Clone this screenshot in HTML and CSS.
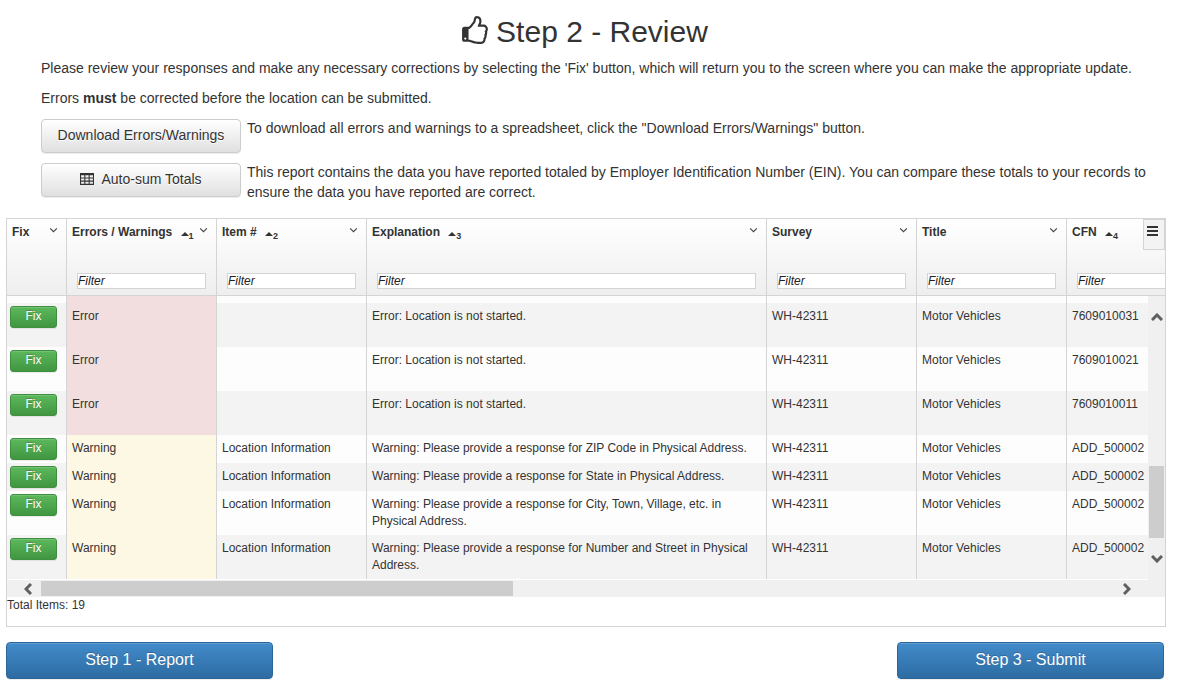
FILE: index.html
```html
<!DOCTYPE html>
<html lang="en">

<head>
    <meta charset="utf-8">
    <title>Step 2 - Review</title>
    <link rel="stylesheet" href="styles.css">
</head>

<body>
    <div class="intro">
        <h1>
            <svg class="thumb" viewBox="0 -128 1536 1664" aria-hidden="true"><path fill="currentColor" d="M256 1216q0-26-19-45t-45-19-45 19-19 45 19 45 45 19 45-19 19-45zm1152-576q0-51-39-89.500t-89-38.500h-352q0-58 48-159.500t48-160.500q0-98-32-145t-128-47q-26 26-38 85t-30.500 125.500-59.500 109.500q-22 23-77 91-4 5-23 30t-31.500 41-34.500 42.500-40 44-38.500 35.500-40 27-35.500 9h-32v640h32q13 0 31.500 3t33 6.500 38 11 35 11.500 35.500 12.500 29 10.500q211 73 342 73h121q192 0 192-167 0-26-5-56 30-16 47.500-52.500t17.500-73.500-18-69q53-50 53-119 0-25-10-55.500t-25-47.500q32-1 53.500-47t21.500-81zm128-1q0 89-49 163 9 33 9 69 0 77-38 144 3 21 3 43 0 101-60 178 1 139-85 219.500t-227 80.500h-129q-96 0-189.500-22.500t-216.500-65.500q-116-40-138-40h-288q-53 0-90.500-37.500t-37.500-90.500v-640q0-53 37.500-90.500t90.500-37.500h274q36-24 137-155 58-75 107-128 24-25 35.500-85.500t30.500-126.500 62-108q39-37 90-37 84 0 151 32.500t102 101.500 35 186q0 93-48 192h176q104 0 180 76t76 179z"/></svg>
            Step 2 - Review
        </h1>
        <p>Please review your responses and make any necessary corrections by selecting the 'Fix' button, which will return you to the screen where you can make the appropriate update.</p>
        <p>Errors <strong>must</strong> be corrected before the location can be submitted.</p>
        <div class="action-row">
            <button type="button" class="btn btn-default">Download Errors/Warnings</button>
            <div>To download all errors and warnings to a spreadsheet, click the "Download Errors/Warnings" button.</div>
        </div>
        <div class="action-row">
            <button type="button" class="btn btn-default">
                <svg class="table-icon" viewBox="0 0 13 11" aria-hidden="true"><path fill="none" stroke="currentColor" d="M.5 .5h12v10h-12zM0 1.500h13M0 4.500h13M0 7.500h13M4.500 2v9M8.500 2v9"/></svg>
                Auto-sum Totals
            </button>
            <div>This report contains the data you have reported totaled by Employer Identification Number (EIN). You can compare these totals to your records to ensure the data you have reported are correct.</div>
        </div>
    </div>

    <div class="grid">
        <div class="grid-viewport">
            <table>
                <colgroup>
                    <col class="col-fix">
                    <col>
                    <col>
                    <col class="col-explanation">
                    <col>
                    <col>
                    <col>
                </colgroup>
                <thead>
                    <tr>
                        <th>Fix <svg class="chevron" viewBox="0 0 8 5"><path d="M1 1l3 3 3-3"/></svg></th>
                        <th>Errors / Warnings <span class="sort">1</span><svg class="chevron" viewBox="0 0 8 5"><path d="M1 1l3 3 3-3"/></svg><input type="text" placeholder="Filter" aria-label="Filter errors / warnings"></th>
                        <th>Item # <span class="sort">2</span><svg class="chevron" viewBox="0 0 8 5"><path d="M1 1l3 3 3-3"/></svg><input type="text" placeholder="Filter" aria-label="Filter item number"></th>
                        <th>Explanation <span class="sort">3</span><svg class="chevron" viewBox="0 0 8 5"><path d="M1 1l3 3 3-3"/></svg><input type="text" placeholder="Filter" aria-label="Filter explanation"></th>
                        <th>Survey <svg class="chevron" viewBox="0 0 8 5"><path d="M1 1l3 3 3-3"/></svg><input type="text" placeholder="Filter" aria-label="Filter survey"></th>
                        <th>Title <svg class="chevron" viewBox="0 0 8 5"><path d="M1 1l3 3 3-3"/></svg><input type="text" placeholder="Filter" aria-label="Filter title"></th>
                        <th>CFN <span class="sort">4</span><input type="text" placeholder="Filter" aria-label="Filter CFN"></th>
                    </tr>
                </thead>
                <tbody>
                    <!-- bottom edge of the row scrolled under the header -->
                    <tr class="cut"><td></td><td class="error"></td><td></td><td></td><td></td><td></td><td></td></tr>
                    <tr class="tall">
                        <td class="fix"><button type="button" class="btn btn-success">Fix</button></td>
                        <td class="error">Error</td>
                        <td></td>
                        <td>Error: Location is not started.</td>
                        <td>WH-42311</td>
                        <td>Motor Vehicles</td>
                        <td>7609010031</td>
                    </tr>
                    <tr class="tall">
                        <td class="fix"><button type="button" class="btn btn-success">Fix</button></td>
                        <td class="error">Error</td>
                        <td></td>
                        <td>Error: Location is not started.</td>
                        <td>WH-42311</td>
                        <td>Motor Vehicles</td>
                        <td>7609010021</td>
                    </tr>
                    <tr class="tall">
                        <td class="fix"><button type="button" class="btn btn-success">Fix</button></td>
                        <td class="error">Error</td>
                        <td></td>
                        <td>Error: Location is not started.</td>
                        <td>WH-42311</td>
                        <td>Motor Vehicles</td>
                        <td>7609010011</td>
                    </tr>
                    <tr>
                        <td class="fix"><button type="button" class="btn btn-success">Fix</button></td>
                        <td class="warning">Warning</td>
                        <td>Location Information</td>
                        <td>Warning: Please provide a response for ZIP Code in Physical Address.</td>
                        <td>WH-42311</td>
                        <td>Motor Vehicles</td>
                        <td>ADD_500002</td>
                    </tr>
                    <tr>
                        <td class="fix"><button type="button" class="btn btn-success">Fix</button></td>
                        <td class="warning">Warning</td>
                        <td>Location Information</td>
                        <td>Warning: Please provide a response for State in Physical Address.</td>
                        <td>WH-42311</td>
                        <td>Motor Vehicles</td>
                        <td>ADD_500002</td>
                    </tr>
                    <tr>
                        <td class="fix"><button type="button" class="btn btn-success">Fix</button></td>
                        <td class="warning">Warning</td>
                        <td>Location Information</td>
                        <td>Warning: Please provide a response for City, Town, Village, etc. in Physical Address.</td>
                        <td>WH-42311</td>
                        <td>Motor Vehicles</td>
                        <td>ADD_500002</td>
                    </tr>
                    <tr>
                        <td class="fix"><button type="button" class="btn btn-success">Fix</button></td>
                        <td class="warning">Warning</td>
                        <td>Location Information</td>
                        <td>Warning: Please provide a response for Number and Street in Physical Address.</td>
                        <td>WH-42311</td>
                        <td>Motor Vehicles</td>
                        <td>ADD_500002</td>
                    </tr>
                </tbody>
            </table>
            <button type="button" class="grid-menu" aria-label="Grid menu"></button>
            <div class="scroll-y">
                <svg class="arrow-y" viewBox="0 0 12 8"><path d="M1 7l5-5 5 5"/></svg>
                <div class="thumb-y"></div>
                <svg class="arrow-y" viewBox="0 0 12 8"><path d="M1 1l5 5 5-5"/></svg>
            </div>
        </div>
        <div class="scroll-x">
            <svg class="arrow-x" viewBox="0 0 8 12"><path d="M7 1l-5 5 5 5"/></svg>
            <div class="thumb-x"></div>
            <svg class="arrow-x" viewBox="0 0 8 12"><path d="M1 1l5 5-5 5"/></svg>
        </div>
        <div class="grid-footer">Total Items: 19</div>
    </div>

    <div class="steps">
        <button type="button" class="btn btn-primary">Step 1 - Report</button>
        <button type="button" class="btn btn-primary">Step 3 - Submit</button>
    </div>
</body>

</html>
```
FILE: styles.css
```css
* {
    box-sizing: border-box;
}

body {
    margin: 0;
    padding: 15px 13px 10px 6px;
    font-family: Arial, "Liberation Sans", sans-serif;
    font-size: 14px;
    line-height: 20px;
    color: #333;
    background-color: #fff;
}

h1 {
    display: flex;
    justify-content: center;
    align-items: center;
    gap: 8px;
    margin: 0 0 10px;
    font-size: 30px;
    font-weight: normal;
    line-height: 33px;
}

.thumb {
    width: 26px;
    height: 28px;
    margin-bottom: 3px;
}

.intro {
    padding: 0 12px 0 35px;
}

.intro h1 {
    margin-left: -25px;
}

p {
    margin: 0 0 10px;
}

.action-row {
    display: flex;
    align-items: flex-start;
    gap: 6px;
    margin-bottom: 9px;
}

.action-row .btn {
    flex: none;
    margin-top: 1px;
}

.action-row:last-child {
    margin-bottom: 16px;
}

.btn {
    padding: 0 0 2px;
    border: 1px solid;
    border-radius: 4px;
    font-family: inherit;
    cursor: pointer;
}

.btn-default {
    display: flex;
    justify-content: center;
    align-items: center;
    gap: 7px;
    width: 200px;
    height: 34px;
    font-size: 14px;
    color: #333;
    text-shadow: 0 1px 0 #fff;
    background: linear-gradient(#fff, #e0e0e0);
    border-color: #ccc;
    box-shadow: inset 0 1px 0 rgba(255, 255, 255, .15), 0 1px 1px rgba(0, 0, 0, .075);
}

.table-icon {
    width: 14px;
    height: 12px;
}

.btn-success {
    display: block;
    width: 47px;
    height: 22px;
    font-size: 12px;
    color: #fff;
    text-shadow: 0 -1px 0 rgba(0, 0, 0, .2);
    background: linear-gradient(#5cb85c, #419641);
    border-color: #3e8f3e;
    border-radius: 3px;
    box-shadow: inset 0 1px 0 rgba(255, 255, 255, .15), 0 1px 1px rgba(0, 0, 0, .075);
}

.btn-primary {
    width: 267px;
    height: 37px;
    font-size: 16px;
    color: #fff;
    text-shadow: 0 -1px 0 rgba(0, 0, 0, .2);
    background: linear-gradient(#428bca, #2d6ca2);
    border-color: #2b669a;
    box-shadow: inset 0 1px 0 rgba(255, 255, 255, .15), 0 1px 1px rgba(0, 0, 0, .075);
}

.grid {
    border: 1px solid #d4d4d4;
    font-size: 12px;
    line-height: 17px;
}

.grid-viewport {
    position: relative;
    overflow: hidden;
}

table {
    width: 1210px;
    table-layout: fixed;
    border-collapse: separate;
    border-spacing: 0;
    border-bottom: 1px solid #fff;
}

col {
    width: 150px;
}

.col-fix {
    width: 60px;
}

.col-explanation {
    width: 400px;
}

thead tr {
    background: linear-gradient(#fff, #eee);
}

th {
    position: relative;
    height: 77px;
    padding: 5px;
    border-right: 1px solid #d4d4d4;
    border-bottom: 1px solid #d4d4d4;
    text-align: left;
    vertical-align: top;
}

th input {
    position: absolute;
    left: 10px;
    bottom: 6px;
    width: calc(100% - 20px);
    height: 16px;
    padding: 0;
    border: 1px solid #d4d4d4;
    font-family: inherit;
    font-size: 12px;
    color: #333;
    background-color: #fff;
}

th input::placeholder {
    color: #222;
    font-style: italic;
    opacity: 1;
}

.sort {
    margin-left: 5px;
    font-size: 9px;
    vertical-align: -3px;
    line-height: 9px;
}

.sort::before {
    content: "";
    display: inline-block;
    border: 4px solid transparent;
    border-top: 0;
    border-bottom-color: #333;
    vertical-align: 3px;
}

.chevron {
    position: absolute;
    top: 8px;
    right: 8px;
    width: 9px;
    height: 6px;
}

.chevron path {
    fill: none;
    stroke: #444;
}

td {
    padding: 5px;
    border-right: 1px solid #d4d4d4;
    vertical-align: top;
}

tbody tr {
    background-color: #f3f3f3;
}

tbody tr:nth-child(odd) {
    background-color: #fdfdfd;
}

.tall {
    height: 44px;
}

.cut td {
    height: 7px;
    padding: 0;
}

.fix {
    padding: 3px;
}

.error {
    background-color: #f2dede;
}

.warning {
    background-color: #fcf8e3;
}

.grid-menu {
    position: absolute;
    top: 0;
    right: 0;
    width: 22px;
    height: 31px;
    padding: 0;
    border: 1px solid #d4d4d4;
    background-color: #f3f3f3;
}

/* three bars */
.grid-menu::before {
    content: "";
    position: absolute;
    top: 6px;
    left: 3px;
    width: 11px;
    height: 2px;
    background-color: #333;
    box-shadow: 0 4px #333, 0 8px #333;
}

.scroll-y {
    position: absolute;
    top: 77px;
    right: 0;
    bottom: 0;
    display: flex;
    flex-direction: column;
    align-items: center;
    width: 17px;
    padding: 17px 0;
    background-color: #f0f0f0;
}

.thumb-y {
    width: 15px;
    height: 72px;
    margin: auto 0 17px;
    background-color: #cdcdcd;
}

.scroll-x {
    display: flex;
    align-items: center;
    gap: 9px;
    height: 17px;
    padding: 0 34px 0 17px;
    background-color: #f0f0f0;
}

.thumb-x {
    width: 472px;
    height: 15px;
    margin-right: auto;
    background-color: #cdcdcd;
}

.arrow-y {
    width: 12px;
    height: 8px;
}

.arrow-x {
    width: 8px;
    height: 12px;
}

.arrow-y path,
.arrow-x path {
    fill: none;
    stroke: #606060;
    stroke-width: 3px;
}

.grid-footer {
    height: 29px;
}

.steps {
    display: flex;
    justify-content: space-between;
    margin-top: 15px;
    padding-right: 2px;
}
```
